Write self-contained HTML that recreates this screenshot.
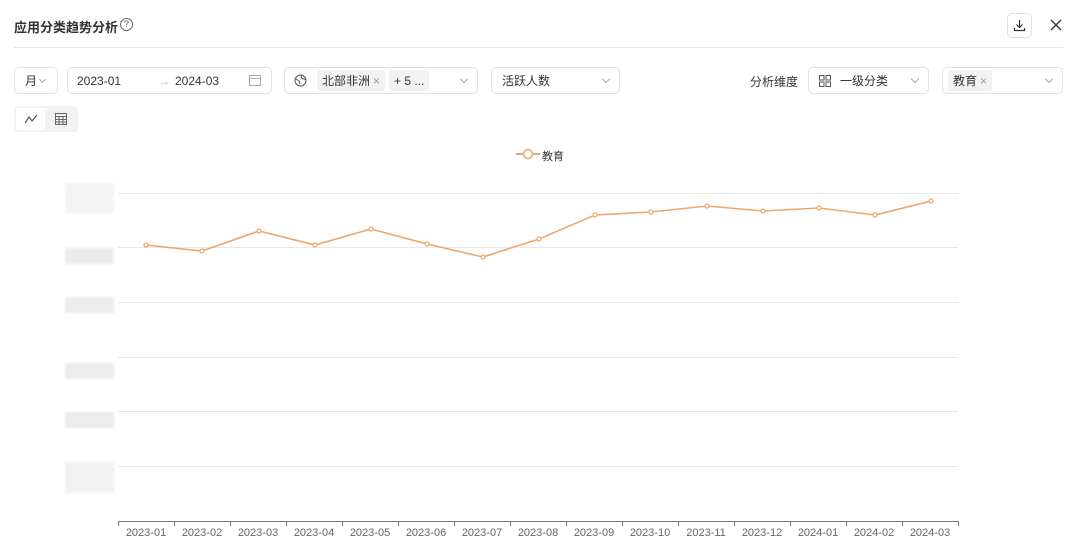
<!DOCTYPE html>
<html><head><meta charset="utf-8"><style>
*{box-sizing:border-box;margin:0;padding:0}
body{width:1080px;height:552px;background:#fff;font-family:"Liberation Sans","Noto Sans CJK SC",sans-serif;color:#333;position:relative;overflow:hidden}
.a{position:absolute}
.box{position:absolute;border:1px solid #e2e2e2;border-radius:5px;height:27px;top:67px;font-size:12px;display:flex;align-items:center;white-space:nowrap}
.chev{position:absolute;right:10px;top:8px;width:6px;height:6px;border-right:1px solid #aaa;border-bottom:1px solid #aaa;transform:rotate(45deg)}
.tag{background:#f2f2f2;border-radius:3px;padding:2px 5px;font-size:12px;height:21px;display:flex;align-items:center;white-space:nowrap}
.blur{position:absolute;left:65px;width:49px;background:#ececec;filter:blur(1px)}
</style></head><body>
<div class="a" style="left:14px;top:17px;font-size:13px;font-weight:bold;color:#333">应用分类趋势分析</div>
<div class="a" style="left:120px;top:18px;width:13px;height:13px;border:1px solid #666;border-radius:50%;font-size:9px;text-align:center;line-height:11px;color:#555">?</div>
<div class="a" style="left:1007px;top:13px;width:25px;height:25px;border:1px solid #e0e0e0;border-radius:5px"></div>
<svg class="a" style="left:1012px;top:18px" width="15" height="15" viewBox="0 0 15 15"><path d="M7.5 2v7M4.5 6.5l3 3 3-3M2.5 10v2.5h10V10" stroke="#333" fill="none" stroke-width="1.2"/></svg>
<svg class="a" style="left:1050px;top:19px" width="12" height="12"><path d="M1 1l10 10M11 1L1 11" stroke="#333" stroke-width="1.3"/></svg>
<div class="a" style="left:14px;top:47px;width:1049px;height:1px;background:#e8e8e8"></div>

<div class="box" style="left:14px;width:44px;padding-left:10px">月<div class="chev" style="right:12px;width:5px;height:5px;top:9px"></div></div>
<div class="box" style="left:67px;width:205px;padding-left:9px">2023-01<span style="position:absolute;left:90px;color:#bbb">→</span><span style="position:absolute;left:107px">2024-03</span>
<svg style="position:absolute;right:10px;top:7px" width="12" height="11"><rect x="0.5" y="0.5" width="11" height="10" fill="none" stroke="#aaa"/><path d="M0.5 3.5h11" stroke="#aaa"/></svg></div>
<div class="box" style="left:284px;width:194px;padding-left:9px">
<svg width="13" height="13"><circle cx="6.5" cy="6.5" r="5.5" fill="none" stroke="#555"/><path d="M2 5l3 2 1 3M7 1.5l1 3 3.5 1" stroke="#555" fill="none"/></svg>
<div class="tag" style="margin-left:10px">北部非洲 <span style="color:#999;margin-left:3px">×</span></div>
<div class="tag" style="margin-left:4px;width:40px">+ 5 ...</div>
<div class="chev"></div></div>
<div class="box" style="left:491px;width:129px;padding-left:10px">活跃人数<div class="chev"></div></div>
<div class="a" style="left:750px;top:73px;font-size:12px">分析维度</div>
<div class="box" style="left:808px;width:121px;padding-left:10px">
<svg width="12" height="12"><rect x="0.5" y="0.5" width="4.5" height="4.5" fill="none" stroke="#555"/><rect x="7" y="0.5" width="4.5" height="4.5" fill="none" stroke="#555"/><rect x="0.5" y="7" width="4.5" height="4.5" fill="none" stroke="#555"/><rect x="7" y="7" width="4.5" height="4.5" fill="none" stroke="#555"/></svg>
<span style="margin-left:9px">一级分类</span><div class="chev"></div></div>
<div class="box" style="left:942px;width:121px;padding-left:5px"><div class="tag">教育 <span style="color:#999;margin-left:3px">×</span></div><div class="chev"></div></div>

<div class="a" style="left:14px;top:106px;width:64px;height:26px;background:#f2f2f2;border-radius:4px"></div>
<div class="a" style="left:16px;top:108px;width:29px;height:22px;background:#fff;border-radius:3px"></div>
<svg class="a" style="left:24px;top:114px" width="14" height="10"><path d="M1 9l4-6 3 4 5-6" stroke="#555" fill="none" stroke-width="1.2"/></svg>
<svg class="a" style="left:55px;top:113px" width="12" height="12"><rect x="0.5" y="0.5" width="11" height="11" fill="none" stroke="#666"/><path d="M0.5 3.5h11M0.5 6.5h11M0.5 9h11M4 3.5v8M8 3.5v8" stroke="#666" fill="none"/></svg>

<svg class="a" style="left:516px;top:148px" width="24" height="12"><path d="M0 6h24" stroke="#f0a66a" stroke-width="2"/><circle cx="12" cy="6" r="4.5" fill="#fff" stroke="#f0a66a" stroke-width="1.5"/></svg>
<div class="a" style="left:542px;top:148px;font-size:11px;color:#333">教育</div>

<div class="blur" style="top:183px;height:30px;background:#f3f3f3"></div>
<div class="blur" style="top:248px;height:16px"></div>
<div class="blur" style="top:297px;height:16px"></div>
<div class="blur" style="top:363px;height:16px"></div>
<div class="blur" style="top:412px;height:16px"></div>
<div class="blur" style="top:462px;height:31px;background:#f1f1f1"></div>

<svg class="a" style="left:0;top:0" width="1080" height="552">
<g stroke="#e8e8e8" stroke-width="1">
<path d="M118 193.5h840M118 247.5h840M118 302.5h840M118 357.5h840M118 411.5h840M118 466.5h840"/></g>
<path d="M118 521.5h840" stroke="#777"/>
<g stroke="#777"><path d="M118.5 521v5M174.5 521v5M230.5 521v5M286.5 521v5M342.5 521v5M398.5 521v5M454.5 521v5M510.5 521v5M566.5 521v5M622.5 521v5M678.5 521v5M734.5 521v5M790.5 521v5M846.5 521v5M902.5 521v5M958.5 521v5"/></g>
<polyline fill="none" stroke="#f0a66a" stroke-width="1.6" points="146,245 202,251 259,231 315,245 371,229 427,244 483,257 539,239 595,215 651,212 707,206 763,211 819,208 875,215 931,201"/>
<g fill="#fff" stroke="#f0a66a" stroke-width="1.2">
<circle cx="146" cy="245" r="2"/><circle cx="202" cy="251" r="2"/><circle cx="259" cy="231" r="2"/><circle cx="315" cy="245" r="2"/><circle cx="371" cy="229" r="2"/><circle cx="427" cy="244" r="2"/><circle cx="483" cy="257" r="2"/><circle cx="539" cy="239" r="2"/><circle cx="595" cy="215" r="2"/><circle cx="651" cy="212" r="2"/><circle cx="707" cy="206" r="2"/><circle cx="763" cy="211" r="2"/><circle cx="819" cy="208" r="2"/><circle cx="875" cy="215" r="2"/><circle cx="931" cy="201" r="2"/></g>
<g font-family="Liberation Sans,sans-serif" font-size="11" fill="#666" text-anchor="middle">
<text x="146" y="536">2023-01</text><text x="202" y="536">2023-02</text><text x="258" y="536">2023-03</text><text x="314" y="536">2023-04</text><text x="370" y="536">2023-05</text><text x="426" y="536">2023-06</text><text x="482" y="536">2023-07</text><text x="538" y="536">2023-08</text><text x="594" y="536">2023-09</text><text x="650" y="536">2023-10</text><text x="706" y="536">2023-11</text><text x="762" y="536">2023-12</text><text x="818" y="536">2024-01</text><text x="874" y="536">2024-02</text><text x="930" y="536">2024-03</text></g>
</svg>
</body></html>
